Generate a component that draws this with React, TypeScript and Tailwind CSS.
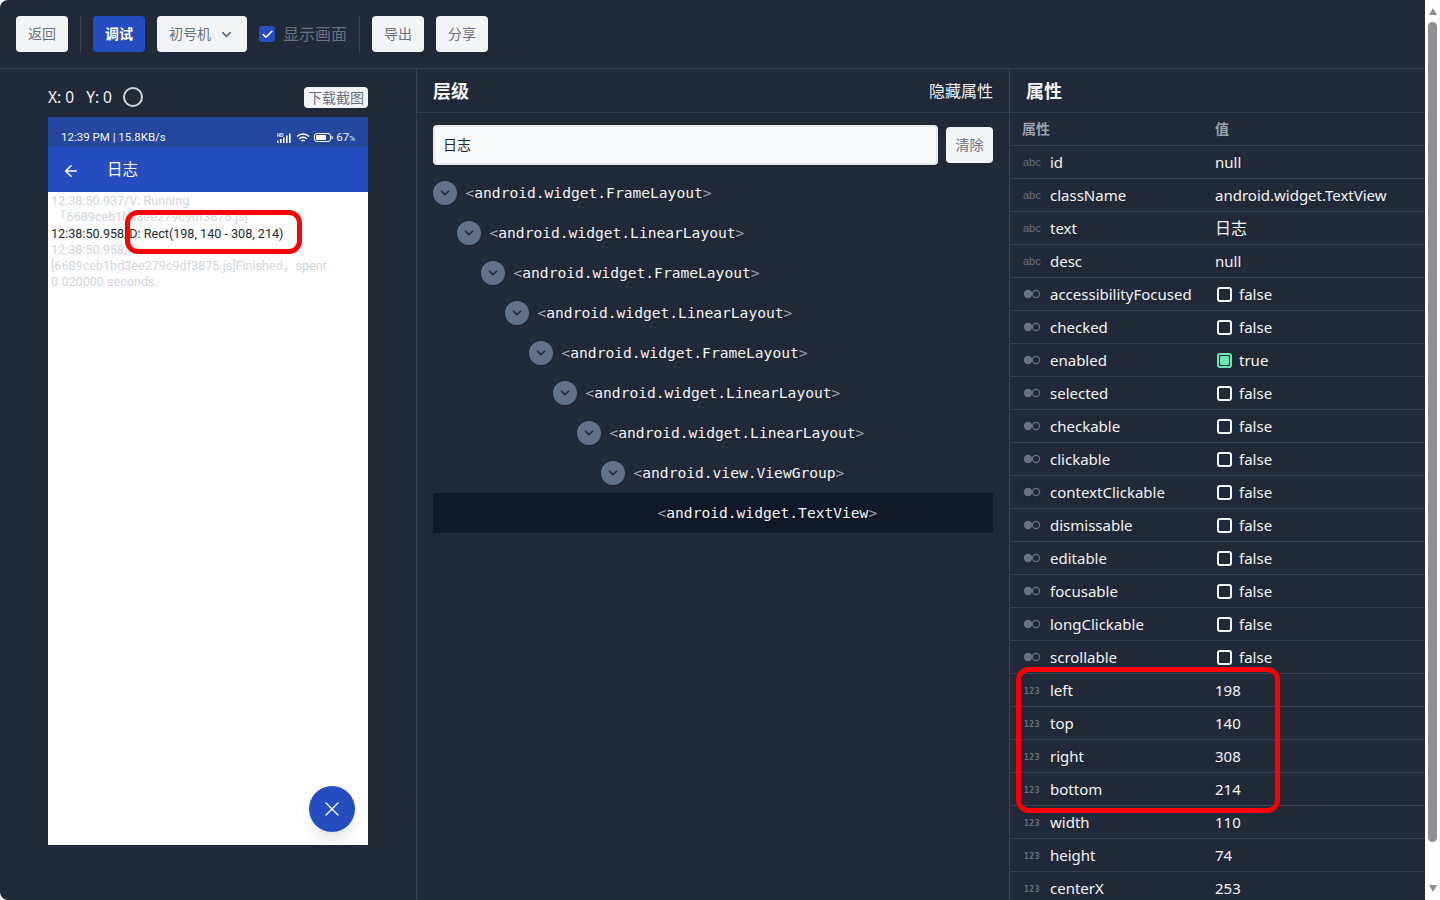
import { ArrowLeft, Check, ChevronDown, X } from "lucide-react";

const sans = "font-['Noto_Sans','Noto_Sans_CJK_SC',sans-serif]";

const nodes = [
    "android.widget.FrameLayout",
    "android.widget.LinearLayout",
    "android.widget.FrameLayout",
    "android.widget.LinearLayout",
    "android.widget.FrameLayout",
    "android.widget.LinearLayout",
    "android.widget.LinearLayout",
    "android.view.ViewGroup",
];

const indents = ["pl-0", "pl-6", "pl-12", "pl-[72px]", "pl-24", "pl-[120px]", "pl-36", "pl-[168px]"];

const stringProps = [
    ["id", "null"],
    ["className", "android.widget.TextView"],
    ["text", "日志"],
    ["desc", "null"],
];

const boolProps = [
    ["accessibilityFocused", false],
    ["checked", false],
    ["enabled", true],
    ["selected", false],
    ["checkable", false],
    ["clickable", false],
    ["contextClickable", false],
    ["dismissable", false],
    ["editable", false],
    ["focusable", false],
    ["longClickable", false],
    ["scrollable", false],
] as const;

const numberProps = [
    ["left", "198"],
    ["top", "140"],
    ["right", "308"],
    ["bottom", "214"],
    ["width", "110"],
    ["height", "74"],
    ["centerX", "253"],
];

function ToolButton({label}: { label: string }) {
    return (
        <button className="h-9 w-[52px] rounded bg-gray-100 text-sm text-gray-500">
            {label}
        </button>
    );
}

function Row({type, name, children}: { type: "abc" | "bool" | "num"; name: string; children: React.ReactNode }) {
    return (
        <div className="flex h-[33px] shrink-0 items-center border-b border-[#374151] text-[15px] text-gray-100">
            <div className="flex w-[40px] shrink-0 justify-start pl-[13px]">
                {type === "abc" && <span className="font-['Liberation_Sans'] text-[11px] leading-none text-gray-500">abc</span>}
                {type === "num" && <span className="ml-[1px] mt-[3px] font-['DejaVu_Sans_Mono'] text-[8px] font-bold leading-none tracking-[0.5px] text-gray-500">123</span>}
                {type === "bool" && (
                    <svg width="18" height="10" viewBox="0 0 18 10" className="text-gray-500">
                        <circle cx="5" cy="5" r="4.2" fill="currentColor"/>
                        <circle cx="13" cy="5" r="3.6" fill="none" stroke="currentColor" strokeWidth="1.2"/>
                    </svg>
                )}
            </div>
            <div className="w-[165px] shrink-0">{name}</div>
            <div className="flex items-center">{children}</div>
        </div>
    );
}

function StatusIcons() {
    return (
        <div className="flex items-center gap-[4px]">
            <svg width="15" height="10" viewBox="0 0 15 10" fill="white">
                <text x="0" y="3.6" fontSize="4.5" fontWeight="700" fontFamily="Liberation Sans">HD</text>
                <rect x="0" y="7.5" width="1.6" height="2.5"/>
                <rect x="3" y="6" width="1.6" height="4"/>
                <rect x="6" y="4.5" width="1.6" height="5.5"/>
                <rect x="9" y="2.5" width="1.6" height="7.5"/>
                <rect x="12" y="0.5" width="1.6" height="9.5"/>
            </svg>
            <svg width="14" height="10" viewBox="0 0 14 10" fill="none" stroke="white" strokeWidth="1.5">
                <path d="M1 3.5a8.5 8.5 0 0 1 12 0"/>
                <path d="M3.2 5.8a5.2 5.2 0 0 1 7.6 0"/>
                <path d="M5.4 8a2.2 2.2 0 0 1 3.2 0"/>
            </svg>
            <svg width="19" height="9" viewBox="0 0 19 9">
                <rect x="0.5" y="0.5" width="16" height="8" rx="2.5" fill="none" stroke="white"/>
                <rect x="2" y="2" width="10" height="5" rx="1" fill="white"/>
                <rect x="17.5" y="3" width="1.2" height="3" fill="white"/>
            </svg>
        </div>
    );
}

function Phone() {
    return (
        <div className="relative flex h-[728px] w-[320px] flex-col bg-white font-['Roboto','Noto_Sans_CJK_SC',sans-serif]">
            <div className="flex h-[30px] items-center justify-between bg-[#23479f] px-[13px] pt-[11px] text-[11.5px] text-gray-100">
                <span>12:39 PM | 15.8KB/s</span>
                <div className="flex items-center gap-[3px]">
                    <StatusIcons/>
                    <span>67<span className="text-[8px]">%</span></span>
                </div>
            </div>
            <div className="flex h-[45px] items-center bg-[#254dc0] pl-[14px] pt-[2px] text-white">
                <ArrowLeft className="h-[18px] w-[18px]" strokeWidth={2}/>
                <span className="ml-[27px] text-[15.5px]">日志</span>
            </div>
            <div className="px-[3px] pt-[1px] text-[12.6px] leading-[16.3px] text-gray-300">
                <div>12:38:50.937/V: Running</div>
                <div className="pl-[3px]">「6689ceb1bd3ee279c9df3875.js]</div>
                <div className="text-gray-800">12:38:50.958/D: Rect(198, 140 - 308, 214)</div>
                <div>12:38:50.958/V:</div>
                <div>[6689ceb1bd3ee279c9df3875.js]Finished，spent</div>
                <div>0.020000 seconds.</div>
            </div>
            <div className="absolute left-[261px] top-[669px] flex h-[46px] w-[46px] items-center justify-center rounded-full bg-[#254dc0] text-white shadow-lg">
                <X className="h-[24px] w-[24px]" strokeWidth={1.4}/>
            </div>
            <div className="absolute left-[77px] top-[93px] h-[44px] w-[177px] rounded-[13px] border-[5px] border-[#ff0000]"/>
        </div>
    );
}

function Scrollbar() {
    return (
        <div className="flex h-full w-[15px] shrink-0 flex-col items-center bg-white">
            <div className="mt-[8px] h-0 w-0 shrink-0 border-x-[4.5px] border-b-[7px] border-x-transparent border-b-[#8f8f8f]"/>
            <div className="mt-[7px] h-[820px] w-[9px] rounded-full bg-[#8f8f8f]"/>
            <div className="mb-[8px] mt-auto h-0 w-0 shrink-0 border-x-[4.5px] border-t-[7px] border-x-transparent border-t-[#8f8f8f]"/>
        </div>
    );
}

export default function App() {
    return (
        <div className={`flex h-[900px] w-[1440px] overflow-hidden bg-white ${sans}`}>
            <div className="relative flex min-w-0 flex-1 flex-col overflow-hidden rounded-l-lg bg-[#212939]">
                <div className="flex h-[69px] shrink-0 items-center border-b border-[#374151] px-4">
                    <ToolButton label="返回"/>
                    <div className="mx-3 h-9 w-px bg-[#374151]"/>
                    <button className="h-9 w-[52px] rounded bg-[#254dc0] text-sm font-bold text-white">调试</button>
                    <button className="ml-3 flex h-9 w-[90px] items-center rounded bg-gray-100 pl-3 text-sm text-gray-500">
                        初号机
                        <ChevronDown className="ml-[8px] h-[15px] w-[15px]" strokeWidth={3}/>
                    </button>
                    <div className="ml-3 flex h-4 w-4 items-center justify-center rounded-[3px] bg-[#254dc0]">
                        <Check className="h-[13px] w-[13px] text-white" strokeWidth={3}/>
                    </div>
                    <span className="ml-2 text-base text-gray-500">显示画面</span>
                    <div className="mx-3 h-9 w-px bg-[#374151]"/>
                    <ToolButton label="导出"/>
                    <div className="ml-3"/>
                    <ToolButton label="分享"/>
                </div>

                <div className="flex min-h-0 flex-1">
                    <div className="w-[417px] shrink-0 border-r border-[#374151] pl-12">
                        <div className="flex h-[48px] w-[320px] items-center pt-[8px] text-[15.5px] text-gray-100">
                            <span className="pt-[2px]">X: 0</span>
                            <span className="ml-[12px] pt-[2px]">Y: 0</span>
                            <div className="ml-[11px] h-5 w-5 rounded-full border-2 border-gray-300"/>
                            <span className="ml-auto rounded-sm bg-gray-100 px-[4px] text-sm leading-[21px] text-gray-500">下载截图</span>
                        </div>
                        <Phone/>
                    </div>

                    <div className="w-[593px] shrink-0 border-r border-[#374151]">
                        <div className="flex h-[44px] items-center justify-between border-b border-[#374151] px-4 text-gray-100">
                            <span className="text-lg font-bold">层级</span>
                            <span className="text-base">隐藏属性</span>
                        </div>
                        <div className="flex items-center gap-2 px-4 pt-3">
                            <input
                                readOnly
                                value="日志"
                                className="h-10 w-[505px] rounded border-2 border-gray-200 bg-gray-50 pb-[2px] pl-[8px] text-sm text-gray-800"
                            />
                            <button className="h-9 w-[47px] rounded bg-gray-100 text-sm text-gray-500">清除</button>
                        </div>
                        <div className="px-4 pt-2 font-['DejaVu_Sans_Mono',monospace] text-[14.6px] text-gray-100">
                            {nodes.map((n, i) => (
                                <div key={i} className={`flex h-10 items-center ${indents[i]}`}>
                                    <div className="flex h-6 w-6 items-center justify-center rounded-full bg-[#64708a] text-[#1f2937]">
                                        <ChevronDown className="h-[14px] w-[14px]" strokeWidth={3}/>
                                    </div>
                                    <span className="ml-[8.5px]"><span className="text-gray-400">&lt;</span>{n}<span className="text-gray-400">&gt;</span></span>
                                </div>
                            ))}
                            <div className="flex h-10 items-center bg-[#111827] pl-[224.5px]">
                                <span><span className="text-gray-400">&lt;</span>android.widget.TextView<span className="text-gray-400">&gt;</span></span>
                            </div>
                        </div>
                    </div>

                    <div className="flex min-w-0 flex-1 flex-col overflow-hidden">
                        <div className="flex h-[44px] shrink-0 items-center border-b border-[#374151] px-4 text-lg font-bold text-gray-100">
                            属性
                        </div>
                        <div className="flex h-[33px] shrink-0 items-center border-b border-[#374151] pl-3 text-sm font-semibold text-gray-400">
                            <div className="w-[193px]">属性</div>
                            <div>值</div>
                        </div>
                        {stringProps.map(([k, v]) => (
                            <Row key={k} type="abc" name={k}>
                                <span className={k === "text" ? "text-base" : ""}>{v}</span>
                            </Row>
                        ))}
                        {boolProps.map(([k, v]) => (
                            <Row key={k} type="bool" name={k}>
                                {v ? (
                                    <div className="ml-[2px] mr-[7px] flex h-[15px] w-[15px] items-center justify-center rounded-[3px] border-2 border-[#6ee7b7]">
                                        <div className="h-[9px] w-[9px] rounded-[1px] bg-[#6ee7b7]"/>
                                    </div>
                                ) : (
                                    <div className="ml-[2px] mr-[7px] h-[15px] w-[15px] rounded-[3px] border-2 border-gray-100"/>
                                )}
                                {String(v)}
                            </Row>
                        ))}
                        {numberProps.map(([k, v]) => (
                            <Row key={k} type="num" name={k}>{v}</Row>
                        ))}
                    </div>
                </div>

                <div className="absolute left-[1016px] top-[667px] h-[146px] w-[264px] rounded-[13px] border-[5px] border-[#ff0000]"/>
            </div>
            <Scrollbar/>
        </div>
    );
}
